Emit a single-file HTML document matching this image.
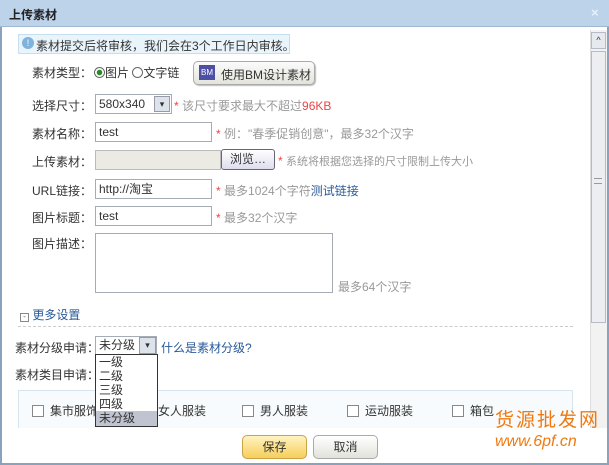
<!DOCTYPE html>
<html><head><meta charset="utf-8"><style>
*{margin:0;padding:0;box-sizing:border-box}
body{width:609px;height:465px;overflow:hidden;background:#fff;font-family:"Liberation Sans","Noto Sans CJK SC",sans-serif;font-size:12px;color:#333;position:relative}
.a{position:absolute;white-space:nowrap}
.lb{text-align:right;width:92px;left:0}
.inp{position:absolute;border:1px solid #a5acb5;background:#fff;height:20px;padding:2px 3px;font-size:12px;line-height:14px}
.g{color:#999}.r{color:#e44}
.cb{display:inline-block;width:12px;height:12px;border:1px solid #888;vertical-align:-2px;margin-right:6px;background:#fff}
</style></head><body>
<div class="a" style="left:0;top:0;width:609px;height:27px;background:#bcd3ea;border-bottom:1px solid #9fb8d2"></div>
<div class="a" style="left:9px;top:6px;font-weight:bold;font-size:12px;color:#222">上传素材</div>
<div class="a" style="left:591px;top:5px;color:#e8f0f8;font-size:13px;font-weight:bold">×</div>
<div class="a" style="left:0;top:27px;width:2px;height:438px;background:#8aa2bb"></div>
<div class="a" style="left:607px;top:27px;width:2px;height:438px;background:#8aa2bb"></div>
<!-- scrollbar -->
<div class="a" style="left:590px;top:30px;width:17px;height:400px;background:#f2f2f2;border-left:1px solid #ddd"></div>
<div class="a" style="left:591px;top:32px;width:15px;height:17px;background:#e6e9ee;border:1px solid #b6bcc6;font-size:9px;text-align:center;line-height:14px">^</div>
<div class="a" style="left:591px;top:51px;width:15px;height:272px;background:#eceef2;border:1px solid #b6bcc6"></div>
<div class="a" style="left:594px;top:178px;width:8px;height:6px;border-top:1px solid #999;border-bottom:1px solid #999"></div>
<!-- notice -->
<div class="a" style="left:18px;top:34px;width:272px;height:20px;background:#eaf4fb;border:1px solid #c6dff0"></div>
<div class="a" style="left:22px;top:37px;width:12px;height:12px;border-radius:50%;background:#7fb2dc;color:#fff;font-size:9px;text-align:center;line-height:12px">!</div>
<div class="a" style="left:36px;top:37px;">素材提交后将审核，我们会在3个工作日内审核。</div>
<!-- rows -->
<div class="a lb" style="top:64px">素材类型：</div>
<div class="a" style="left:94px;top:64px"><span style="display:inline-block;width:11px;height:11px;border:1px solid #666;border-radius:50%;vertical-align:-1px;background:radial-gradient(#2a8a2a 2.5px,#fff 3px)"></span>图片 <span style="display:inline-block;width:11px;height:11px;border:1px solid #666;border-radius:50%;vertical-align:-1px"></span>文字链</div>
<div class="a" style="left:193px;top:61px;width:122px;height:24px;border:1px solid #aaa;border-radius:5px;background:linear-gradient(#fbfbfb,#e4e4dc);box-shadow:1px 1px 1px #bbb"></div>
<div class="a" style="left:199px;top:65px;width:16px;height:15px;background:#4d4fa5;color:#fff;font-size:8px;line-height:15px;text-align:center">BM</div>
<div class="a" style="left:221px;top:66px">使用BM设计素材</div>

<div class="a lb" style="top:97px">选择尺寸：</div>
<div class="inp" style="left:95px;top:94px;width:77px">580x340</div>
<div class="a" style="left:154px;top:96px;width:16px;height:16px;background:#dde3ea;border:1px solid #99a;font-size:9px;text-align:center;line-height:14px">▾</div>
<div class="a" style="left:174px;top:97px"><span class="r">*</span> <span class="g">该尺寸要求最大不超过</span><span style="color:#e44">96KB</span></div>

<div class="a lb" style="top:125px">素材名称：</div>
<div class="inp" style="left:95px;top:122px;width:117px">test</div>
<div class="a" style="left:216px;top:125px"><span class="r">*</span> <span class="g">例："春季促销创意"，最多32个汉字</span></div>

<div class="a lb" style="top:153px">上传素材：</div>
<div class="inp" style="left:95px;top:150px;width:126px;background:#ebebe4;border-color:#bbb"></div>
<div class="a" style="left:221px;top:149px;width:54px;height:21px;border:1px solid #667;border-radius:3px;background:linear-gradient(#fff,#dde);text-align:center;line-height:19px">浏览…</div>
<div class="a" style="left:278px;top:153px"><span class="r">*</span> <span class="g" style="font-size:11px">系统将根据您选择的尺寸限制上传大小</span></div>

<div class="a lb" style="top:182px">URL链接：</div>
<div class="inp" style="left:95px;top:179px;width:117px">http://淘宝</div>
<div class="a" style="left:216px;top:182px"><span class="r">*</span> <span class="g">最多1024个字符</span><span style="color:#2a5a9a">测试链接</span></div>

<div class="a lb" style="top:209px">图片标题：</div>
<div class="inp" style="left:95px;top:206px;width:117px">test</div>
<div class="a" style="left:216px;top:209px"><span class="r">*</span> <span class="g">最多32个汉字</span></div>

<div class="a lb" style="top:235px">图片描述：</div>
<div class="inp" style="left:95px;top:233px;width:238px;height:60px"></div>
<div class="a g" style="left:338px;top:278px">最多64个汉字</div>

<div class="a" style="left:20px;top:306px;color:#2a5a9a"><span style="display:inline-block;width:9px;height:9px;border:1px solid #888;font-size:8px;line-height:6px;text-align:center;vertical-align:0;color:#555">-</span> 更多设置</div>
<div class="a" style="left:18px;top:326px;width:555px;border-top:1px dashed #ccc"></div>

<div class="a" style="left:15px;top:339px">素材分级申请：</div>
<div class="inp" style="left:95px;top:336px;width:62px;height:19px;padding:1px 3px">未分级</div>
<div class="a" style="left:139px;top:337px;width:17px;height:17px;background:#dde3ea;border:1px solid #99a;font-size:9px;text-align:center;line-height:15px">▾</div>
<div class="a" style="left:161px;top:339px;color:#2a5a9a">什么是素材分级?</div>
<div class="a" style="left:15px;top:366px">素材类目申请：</div>

<div class="a" style="left:18px;top:390px;width:555px;height:40px;background:#f8fbfd;border:1px solid #d5e6f0;border-bottom:none"></div>
<div class="a" style="left:32px;top:402px"><span class="cb"></span>集市服饰</div>
<div class="a" style="left:158px;top:402px">女人服装</div>
<div class="a" style="left:242px;top:402px"><span class="cb"></span>男人服装</div>
<div class="a" style="left:347px;top:402px"><span class="cb"></span>运动服装</div>
<div class="a" style="left:452px;top:402px"><span class="cb"></span>箱包</div>
<div class="a" style="left:32px;top:420px;height:8px;overflow:hidden;color:#555">　</div>

<div class="a" style="left:95px;top:354px;width:63px;height:73px;background:#fff;border:1px solid #333;line-height:14px;padding-left:3px">一级<br>二级<br>三级<br>四级</div>
<div class="a" style="left:96px;top:411px;width:61px;height:15px;background:#c0c4d0;padding-left:3px;line-height:14px">未分级</div>

<div class="a" style="left:2px;top:428px;width:605px;height:37px;background:#fff"></div>
<div class="a" style="left:242px;top:435px;width:65px;height:24px;border:1px solid #c9a24a;border-radius:5px;background:linear-gradient(#fff3c0,#f6cf5a);text-align:center;line-height:22px">保存</div>
<div class="a" style="left:313px;top:435px;width:65px;height:24px;border:1px solid #aaa;border-radius:5px;background:linear-gradient(#fff,#e2e2da);text-align:center;line-height:22px">取消</div>
<div class="a" style="left:495px;top:405px;color:#f07a10;font-size:19px;letter-spacing:2px">货源批发网</div>
<div class="a" style="left:495px;top:433px;color:#f07a10;font-size:16px;font-style:italic">www.6pf.cn</div>
<div class="a" style="left:0;top:463px;width:609px;height:2px;background:#8aa2bb"></div>
</body></html>
